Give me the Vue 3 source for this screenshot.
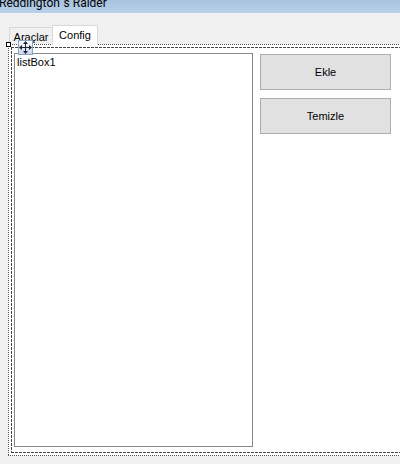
<template>
	<div class="form">
		<header class="title-bar">
			<span class="title">Reddington`s Raider</span>
		</header>
		<main class="client">
			<div class="tabs" role="tablist">
				<button
					v-for="tab in tabs"
					:key="tab"
					type="button"
					role="tab"
					class="tab"
					:class="{ active: tab === activeTab }"
					:aria-selected="tab === activeTab"
					@click="activeTab = tab"
				>{{ tab }}</button>
			</div>
			<section class="tab-control">
				<span class="handle"></span>
				<svg class="move" width="15" height="15" viewBox="0 0 15 15" aria-hidden="true">
					<defs>
						<linearGradient id="move-bg" x1="0" y1="0" x2="0" y2="1">
							<stop offset="0" stop-color="#ffffff" />
							<stop offset="1" stop-color="#c6d4ea" />
						</linearGradient>
					</defs>
					<rect x="0.5" y="0.5" width="14" height="14" fill="url(#move-bg)" stroke="#8ba3c7" />
					<path d="M7 3h1v4h4v1H8v4H7V8H3V7h4z" fill="#1b2333" />
					<path d="M7.5 1L10 4H5zM7.5 14L5 11h5zM1 7.5L4 5v5zM14 7.5L11 10V5z" fill="#1b2333" />
				</svg>
				<div class="tab-page">
					<ul class="list-box" aria-label="listBox1">
						<li v-for="item in items" :key="item">{{ item }}</li>
					</ul>
					<div class="actions">
						<button type="button" class="btn">Ekle</button>
						<button type="button" class="btn">Temizle</button>
					</div>
				</div>
			</section>
		</main>
	</div>
</template>

<script setup>
import { ref } from 'vue'

const tabs = ['Araçlar', 'Config']
const activeTab = ref('Config')
const items = ref(['listBox1'])
</script>

<style>
body {
	margin: 0;
	background: #f0f0f0;
}
</style>

<style scoped>
.form {
	display: flex;
	flex-direction: column;
	min-height: 100vh;
	overflow: hidden;
	background: #f0f0f0;
	font: 11px/14px "Liberation Sans", Arial, sans-serif;
	color: #000;
}

.title-bar {
	display: flex;
	align-items: flex-end;
	height: 13px;
	overflow: hidden;
	background: linear-gradient(#a9c3de, #b9d1ea);
}

.title {
	margin-left: -1px;
	font: 12px/20px Roboto, "Open Sans", sans-serif;
	white-space: nowrap;
}

.client {
	flex: 1;
	display: flex;
	flex-direction: column;
	padding: 12px 0 8px 8px;
}

.tabs {
	display: flex;
	align-items: flex-end;
	height: 19px;
	padding-left: 1px;
}

.tab {
	box-sizing: border-box;
	width: 43px;
	height: 17px;
	padding: 0;
	border: 1px solid #d9d9d9;
	border-width: 1px 0 0 1px;
	background: #f0f0f0;
	font: inherit;
	line-height: 18px;
	color: #000;
}

.tab.active {
	z-index: 1;
	width: 46px;
	height: 20px;
	margin-bottom: -1px;
	border-width: 1px 1px 0;
	background: #fff;
	line-height: 19px;
}

/* dotted selection outline, open on the right */
.tab-control {
	position: relative;
	flex: 1;
	display: flex;
	padding: 3px 0 3px 3px;
	background:
		repeating-linear-gradient(90deg, #555 0 1px, #fff 1px 2px) 0 0 / 100% 1px no-repeat,
		repeating-linear-gradient(90deg, #555 0 1px, #fff 1px 2px) 0 100% / 100% 1px no-repeat,
		repeating-linear-gradient(#555 0 1px, #fff 1px 2px) 0 0 / 1px 100% no-repeat,
		#fff;
}

.tab-page {
	flex: 1;
	display: flex;
	align-items: stretch;
	gap: 7px;
	padding: 6px 9px 6px 3px;
	background:
		repeating-linear-gradient(90deg, #444 0 3px, #fff 3px 4px) 0 0 / 100% 1px no-repeat,
		repeating-linear-gradient(90deg, #444 0 3px, #fff 3px 4px) 0 100% / 100% 1px no-repeat,
		repeating-linear-gradient(#444 0 3px, #fff 3px 4px) 0 0 / 1px 100% no-repeat;
}

.handle {
	position: absolute;
	top: -2px;
	left: -2px;
	z-index: 2;
	box-sizing: border-box;
	width: 5px;
	height: 5px;
	border: 1px solid #000;
	background: #fff;
}

.move {
	position: absolute;
	top: -4px;
	left: 10px;
	z-index: 2;
}

.list-box {
	box-sizing: border-box;
	flex: 1;
	margin: 0;
	padding: 1px 2px;
	border: 1px solid #828790;
	background: #fff;
	list-style: none;
}

.actions {
	flex: 0 0 131px;
	display: flex;
	flex-direction: column;
	gap: 8px;
	padding-top: 1px;
}

.btn {
	height: 36px;
	padding: 0;
	border: 1px solid #adadad;
	background: #e1e1e1;
	font: inherit;
	color: #000;
}

.btn:active {
	border-color: #005499;
	background: #cce4f7;
}
</style>
